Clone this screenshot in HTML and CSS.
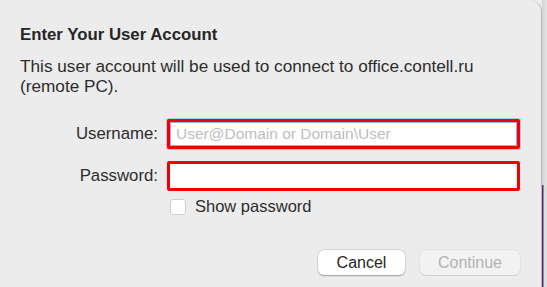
FILE: index.html
```html
<!DOCTYPE html>
<html>
<head>
<meta charset="utf-8">
<link rel="stylesheet" href="styles.css">
</head>
<body>
<div class="screen">
  <div class="dialog">
    <h1 class="title">Enter Your User Account</h1>
    <p class="desc">This user account will be used to connect to office.contell.ru<br>(remote PC).</p>
    <div class="form">
      <div class="row">
        <label class="label">Username:</label>
        <div class="field focused"><span class="placeholder">User@Domain or Domain\User</span></div>
      </div>
      <div class="row">
        <label class="label">Password:</label>
        <div class="field"></div>
      </div>
      <div class="check-row">
        <span class="checkbox"></span>
        <span class="check-label">Show password</span>
      </div>
    </div>
    <div class="buttons">
      <button class="btn">Cancel</button>
      <button class="btn disabled">Continue</button>
    </div>
  </div>
  <div class="side">
    <div class="side-top"></div>
    <div class="side-bottom"></div>
  </div>
</div>
</body>
</html>
```

FILE: styles.css
```css
html, body {
  margin: 0;
  padding: 0;
  width: 547px;
  height: 287px;
  overflow: hidden;
  font-family: "Liberation Sans", Arial, sans-serif;
  background: #ececec;
}
.screen {
  display: flex;
  width: 547px;
  height: 287px;
}
.dialog {
  width: 542px;
  height: 287px;
  box-sizing: border-box;
  background: #ececec;
  border-top-right-radius: 12px;
  border-right: 1px solid #b9b9b9;
  padding: 25px 0 0 20px;
  display: flex;
  flex-direction: column;
}
.side {
  width: 5px;
  display: flex;
  flex-direction: column;
}
.side-top {
  flex: 1;
  background: linear-gradient(to right, #d2d2d2, #e6e6e6);
}
.side-bottom {
  height: 102px;
  background: linear-gradient(to right, #4a2a72 0 1px, #dedede 2px);
}
.title {
  margin: 0;
  font-size: 16.8px;
  font-weight: bold;
  color: #262626;
  line-height: 19px;
}
.desc {
  margin: 12px 0 0 0;
  font-size: 17.2px;
  line-height: 20px;
  color: #2c2c2c;
}
.form {
  margin-top: 23px;
  display: flex;
  flex-direction: column;
  gap: 12px;
}
.row {
  display: flex;
  align-items: center;
}
.label {
  width: 138px;
  text-align: right;
  font-size: 16.8px;
  color: #2c2c2c;
  margin-right: 9px;
}
.field {
  width: 353px;
  height: 30px;
  box-sizing: border-box;
  background: #fff;
  border: 3px solid #f20000;
  border-radius: 2px;
  display: flex;
  align-items: center;
  padding-left: 6px;
}
.field.focused {
  box-shadow: inset 0 0 0 1px #8fb4f0, 0 0 0 1px #a9c6f5;
}
.placeholder {
  font-size: 15.5px;
  color: #bdbdbd;
}
.check-row {
  display: flex;
  align-items: center;
  margin-left: 150px;
  margin-top: -6px;
}
.checkbox {
  width: 16px;
  height: 16px;
  box-sizing: border-box;
  border: 1px solid #cfcfcf;
  border-radius: 3px;
  background: #fff;
  margin-right: 9px;
}
.check-label {
  font-size: 16.5px;
  color: #2c2c2c;
}
.buttons {
  margin-top: auto;
  margin-bottom: 12px;
  display: flex;
  gap: 15px;
  padding-left: 298px;
}
.btn {
  height: 25px;
  border: none;
  border-radius: 6px;
  background: #fff;
  box-shadow: 0 0.5px 1.5px rgba(0,0,0,0.3), 0 0 0 0.5px rgba(0,0,0,0.08);
  font-family: "Liberation Sans", Arial, sans-serif;
  font-size: 16px;
  color: #262626;
  padding: 0;
  width: 87px;
}
.btn.disabled {
  width: 100px;
  background: #f2f2f2;
  color: #b3b3b3;
  box-shadow: 0 0 0 0.5px rgba(0,0,0,0.06), 0 0.5px 1px rgba(0,0,0,0.1);
}
```
